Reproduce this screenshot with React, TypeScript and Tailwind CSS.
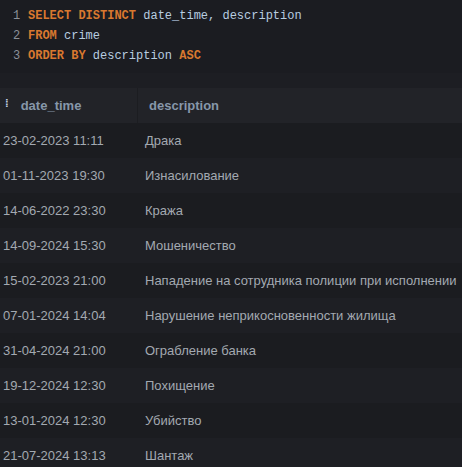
const rows: [string, string][] = [
  ['23-02-2023 11:11', 'Драка'],
  ['01-11-2023 19:30', 'Изнасилование'],
  ['14-06-2022 23:30', 'Кража'],
  ['14-09-2024 15:30', 'Мошеничество'],
  ['15-02-2023 21:00', 'Нападение на сотрудника полиции при исполнении'],
  ['07-01-2024 14:04', 'Нарушение неприкосновенности жилища'],
  ['31-04-2024 21:00', 'Ограбление банка'],
  ['19-12-2024 12:30', 'Похищение'],
  ['13-01-2024 12:30', 'Убийство'],
  ['21-07-2024 13:13', 'Шантаж'],
]

function Kw({ children }: { children: string }) {
  return <span className="font-bold text-[#d9782f]">{children}</span>
}

export default function App() {
  return (
    <div className="h-[467px] w-[462px] overflow-hidden bg-[#1b1c21] font-['Liberation_Sans',Arial,sans-serif]">
      <div className="h-[73px] pt-[6px] font-['Liberation_Mono',monospace] text-[12px] leading-[20px] text-[#b8cde0]">
        <div className="flex">
          <span className="w-[28px] pl-[13px] text-[#8b9099]">1</span>
          <span>
            <Kw>SELECT DISTINCT</Kw> date_time, description
          </span>
        </div>
        <div className="flex">
          <span className="w-[28px] pl-[13px] text-[#8b9099]">2</span>
          <span>
            <Kw>FROM</Kw> crime
          </span>
        </div>
        <div className="flex">
          <span className="w-[28px] pl-[13px] text-[#8b9099]">3</span>
          <span>
            <Kw>ORDER BY</Kw> description <Kw>ASC</Kw>
          </span>
        </div>
      </div>
      <div className="h-[15px] bg-[#1d1e23]" />
      <div className="flex h-[35px] items-center bg-[#222328] text-[13px] font-bold text-[#8797aa]">
        <div className="flex h-full w-[138px] items-center border-r border-[#1c1d21]">
          <span className="ml-[5px] mr-[12px] mb-[4px] text-[11px] leading-none text-[#c6d4e4]">⁞</span>
          <span>date_time</span>
        </div>
        <div className="pl-[11px]">description</div>
      </div>
      {rows.map(([d, t], i) => (
        <div
          key={d + t}
          className={`flex h-[35px] items-center pt-[1px] text-[13px] text-[#a3a9b1] ${i % 2 === 0 ? 'bg-[#1b1c20]' : 'bg-[#1e1f24]'}`}
        >
          <div className="w-[145px] pl-[3px]">{d}</div>
          <div className="whitespace-nowrap">{t}</div>
        </div>
      ))}
    </div>
  )
}
